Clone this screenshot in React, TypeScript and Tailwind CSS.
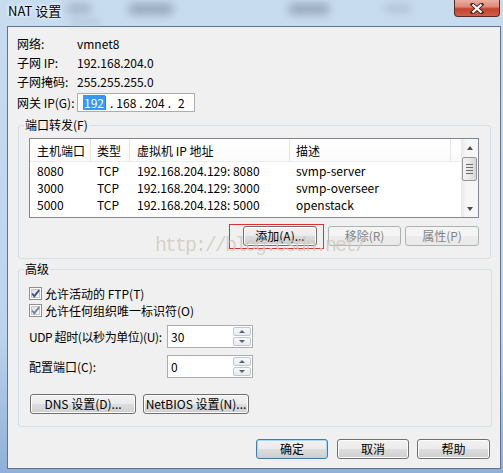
import React from "react";

const btnBase =
  "flex items-center justify-center h-[20px] rounded-[3px] border text-[12px] leading-none whitespace-nowrap";
const btnNormal =
  btnBase +
  " border-[#707070] text-black bg-[linear-gradient(to_bottom,#f2f2f2_0%,#ebebeb_48%,#dddddd_52%,#cfcfcf_100%)] shadow-[inset_0_0_0_1px_#fbfbfb]";
const btnDisabled =
  btnBase +
  " border-[#adb2b5] text-[#838383] bg-[linear-gradient(to_bottom,#f4f4f4_0%,#f4f4f4_48%,#ececec_52%,#e9e9e9_100%)]";
const btnDefault =
  btnBase +
  " border-[#3c7fb1] text-black bg-[linear-gradient(to_bottom,#f2f2f2_0%,#ebebeb_48%,#dddddd_52%,#cfcfcf_100%)] shadow-[inset_0_0_0_1px_#a5d9f7]";

function Row({ label, value }: { label: string; value: string }) {
  return (
    <div className="flex items-center h-[19px]">
      <span className="w-[60px]">{label}</span>
      <span>{value}</span>
    </div>
  );
}

function Check({ color }: { color: string }) {
  return (
    <div className="w-[13px] h-[13px] border border-[#8e8f8f] bg-white p-[1px] flex shrink-0">
      <div className="relative flex-1 border border-[#c4c6c9] bg-[linear-gradient(135deg,#dcdcdc_0%,#f4f4f4_60%,#ffffff_100%)]">
        <svg
          className="absolute left-[-2px] top-[-2px]"
          width="11"
          height="11"
          viewBox="0 0 11 11"
        >
          <path d="M2 5.5 L4.3 8.2 L9.2 2.2" fill="none" stroke={color} strokeWidth="1.9" />
        </svg>
      </div>
    </div>
  );
}

function SpinBtn({ up }: { up: boolean }) {
  return (
    <div className="flex-1 flex items-center justify-center rounded-[2px] border border-[#c3c7cd] bg-[linear-gradient(to_bottom,#f7f8fa_0%,#e8ebef_100%)]">
      {up ? (
        <div className="w-0 h-0 border-x-[3px] border-x-transparent border-b-[3px] border-b-[#4e6384]" />
      ) : (
        <div className="w-0 h-0 border-x-[3px] border-x-transparent border-t-[3px] border-t-[#4e6384]" />
      )}
    </div>
  );
}

function Spin({ value }: { value: string }) {
  return (
    <div className="w-[86px] h-[23px] shrink-0 border border-[#abadb3] bg-white flex items-center">
      <span className="pl-[3px] flex-1">{value}</span>
      <div className="flex flex-col w-[18px] h-full py-[1px] mr-[1px] gap-[1px]">
        <SpinBtn up />
        <SpinBtn up={false} />
      </div>
    </div>
  );
}

export default function App() {
  const hdr = "h-full flex items-center border-r border-[#e5e5e5] pt-[1px]";
  const rows = [
    ["8080", "TCP", "192.168.204.129: 8080", "svmp-server"],
    ["3000", "TCP", "192.168.204.129: 3000", "svmp-overseer"],
    ["5000", "TCP", "192.168.204.128: 5000", "openstack"],
  ];
  return (
    <div className="relative w-[503px] h-[473px] overflow-hidden flex flex-col bg-[linear-gradient(to_bottom,#c8dcf0_0%,#bed4ec_70%,#8fb0d8_100%)] font-['Noto_Sans_CJK_SC',sans-serif] text-[12px] text-black">
      {/* glass blur blobs */}
      <div className="absolute left-[66px] top-[3px] w-[26px] h-[11px] rounded-full bg-[#98a8bb] opacity-70 blur-[4px]" />
      <div className="absolute left-[128px] top-[3px] w-[46px] h-[12px] rounded-full bg-[#8796aa] opacity-70 blur-[4px]" />
      <div className="absolute left-[288px] top-[3px] w-[42px] h-[12px] rounded-full bg-[#8796aa] opacity-70 blur-[4px]" />
      <div className="absolute left-[384px] top-[4px] w-[28px] h-[9px] rounded-full bg-[#a2b2c5] opacity-60 blur-[4px]" />
      <div className="absolute left-[70px] top-[19px] w-[30px] h-[6px] rounded-full bg-[#a7b7c8] opacity-50 blur-[3px]" />

      <div className="relative h-[26px] pl-[8px] pt-[3px] text-[13px] leading-[16px] [text-shadow:0_0_5px_#ffffff,0_0_3px_#ffffff]">
        NAT 设置
      </div>

      {/* close button */}
      <div className="absolute left-[454px] top-0 w-[46px] h-[17px] rounded-b-[4px] border border-t-0 border-[#5a2a22] bg-[linear-gradient(to_bottom,#eab0a2_0%,#dc8a76_42%,#c5432e_55%,#d06048_100%)] flex items-center justify-center">
        <svg width="14" height="11" viewBox="0 0 14 11">
          <path d="M2.5 1.5 L11.5 9.5 M11.5 1.5 L2.5 9.5" stroke="#4a2a26" strokeWidth="4" strokeLinecap="square" />
          <path d="M2.5 1.5 L11.5 9.5 M11.5 1.5 L2.5 9.5" stroke="#ffffff" strokeWidth="2.2" />
        </svg>
      </div>

      <div className="pl-[7px]">
        <div className="w-[494px] h-[443px] border border-[#5d7592] bg-[#f0f0f0] flex flex-col">
          {/* info */}
          <div className="pt-[7px] pl-[9px] flex flex-col">
            <Row label="网络:" value="vmnet8" />
            <Row label="子网 IP:" value="192.168.204.0" />
            <Row label="子网掩码:" value="255.255.255.0" />
            <div className="mt-[2px] flex items-center h-[19px]">
              <span className="w-[60px]">网关 IP(G):</span>
              <div className="w-[118px] h-[19px] border border-[#abadb3] bg-white flex items-center pl-[5px]">
                <span className="bg-[#3399ff] text-white px-[1px] leading-[15px]">192</span>
                <span className="w-[1px] h-[14px] bg-[#b46a00]" />
                <span className="ml-[4px]">.</span>
                <span className="ml-[3px]">168</span>
                <span className="ml-[3px]">.</span>
                <span className="ml-[2px]">204</span>
                <span className="ml-[3px]">.</span>
                <span className="ml-[7px]">2</span>
              </div>
            </div>
          </div>

          {/* port forwarding */}
          <fieldset className="mt-[5px] ml-[10px] w-[473px] border border-[#d5dfe5] rounded-[3px] pb-[9px]">
            <legend className="ml-[5px] px-[1px] leading-[16px]">端口转发(F)</legend>
            <div className="ml-[10px] mt-[5px] w-[450px] h-[80px] border border-[#828790] bg-white flex overflow-hidden">
              <div className="w-[431px] flex flex-col">
                <div className="h-[23px] flex border-b border-[#ececec] bg-[linear-gradient(to_bottom,#ffffff_0%,#fbfbfc_100%)]">
                  <div className={hdr + " w-[61px] pl-[7px]"}>主机端口</div>
                  <div className={hdr + " w-[39px] pl-[6px]"}>类型</div>
                  <div className={hdr + " w-[160px] pl-[7px]"}>虚拟机 IP 地址</div>
                  <div className={hdr + " w-[161px] pl-[6px]"}>描述</div>
                  <div className="w-[10px]" />
                </div>
                {rows.map((r) => (
                  <div key={r[0]} className="h-[17px] flex items-center">
                    <div className="w-[61px] pl-[7px]">{r[0]}</div>
                    <div className="w-[39px] pl-[6px]">{r[1]}</div>
                    <div className="w-[160px] pl-[7px]">{r[2]}</div>
                    <div className="w-[161px] pl-[6px]">{r[3]}</div>
                  </div>
                ))}
              </div>
              {/* scrollbar */}
              <div className="w-[17px] h-full bg-[linear-gradient(to_right,#e8e8e8_0%,#f6f6f6_30%,#f6f6f6_100%)] flex flex-col items-center">
                <div className="h-[17px] w-full flex items-center justify-center">
                  <div className="w-0 h-0 border-x-[3.5px] border-x-transparent border-b-[4px] border-b-[#4d4d4d]" />
                </div>
                <div className="mt-[1px] w-[15px] h-[24px] rounded-[2px] border border-[#979797] bg-[linear-gradient(to_right,#f3f3f3_0%,#e8e8e8_50%,#d6d6d6_100%)] flex flex-col items-center justify-center gap-[2px]">
                  <div className="w-[7px] h-[1px] bg-[#6d6d6d]" />
                  <div className="w-[7px] h-[1px] bg-[#6d6d6d]" />
                  <div className="w-[7px] h-[1px] bg-[#6d6d6d]" />
                  <div className="w-[7px] h-[1px] bg-[#6d6d6d]" />
                </div>
                <div className="flex-1" />
                <div className="h-[17px] w-full flex items-center justify-center">
                  <div className="w-0 h-0 border-x-[3.5px] border-x-transparent border-t-[4px] border-t-[#4d4d4d]" />
                </div>
              </div>
            </div>
            <div className="ml-[10px] mt-[6px] w-[450px] flex justify-end gap-[4px]">
              <div className="w-[95px] h-[25px] border border-[#e0302c] pl-[13px] pr-[6px] pt-[1px]">
                <div className={btnNormal}>添加(A)...</div>
              </div>
              <div className={btnDisabled + " w-[73px] mt-[2px]"}>移除(R)</div>
              <div className={btnDisabled + " w-[74px] mt-[2px]"}>属性(P)</div>
            </div>
          </fieldset>

          {/* advanced */}
          <fieldset className="mt-[2px] ml-[10px] w-[474px] border border-[#d5dfe5] rounded-[3px] pb-[12px]">
            <legend className="ml-[5px] px-[1px] leading-[16px]">高级</legend>
            <div className="ml-[10px] mt-[8px] h-[17px] flex items-center gap-[3px]">
              <Check color="#3a4f8f" />
              <span>允许活动的 FTP(T)</span>
            </div>
            <div className="ml-[10px] h-[17px] flex items-center gap-[3px]">
              <Check color="#7884a4" />
              <span>允许任何组织唯一标识符(O)</span>
            </div>
            <div className="ml-[10px] mt-[6px] h-[23px] flex items-center">
              <span className="w-[138px] shrink-0 whitespace-nowrap tracking-[-0.4px]">UDP 超时(以秒为单位)(U):</span>
              <Spin value="30" />
            </div>
            <div className="ml-[10px] mt-[7px] h-[23px] flex items-center">
              <span className="w-[138px] shrink-0 whitespace-nowrap">配置端口(C):</span>
              <Spin value="0" />
            </div>
            <div className="ml-[11px] mt-[16px] flex gap-[7px]">
              <div className={btnNormal + " w-[106px]"}>DNS 设置(D)...</div>
              <div className={btnNormal + " w-[106px]"}>NetBIOS 设置(N)...</div>
            </div>
          </fieldset>

          {/* bottom buttons */}
          <div className="mt-[12px] flex justify-end pr-[10px]">
            <div className={btnDefault + " w-[72px]"}>确定</div>
            <div className={btnNormal + " w-[72px] ml-[9px]"}>取消</div>
            <div className={btnNormal + " w-[73px] ml-[8px]"}>帮助</div>
          </div>
        </div>
      </div>

      {/* watermark */}
      <div className="absolute left-[155px] top-[236px] text-[20px] leading-[20px] tracking-[-2px] font-['Liberation_Mono',monospace] text-[#cdc9bd] opacity-80 pointer-events-none whitespace-nowrap">
        http://blog.csdn.net/
      </div>
    </div>
  );
}
